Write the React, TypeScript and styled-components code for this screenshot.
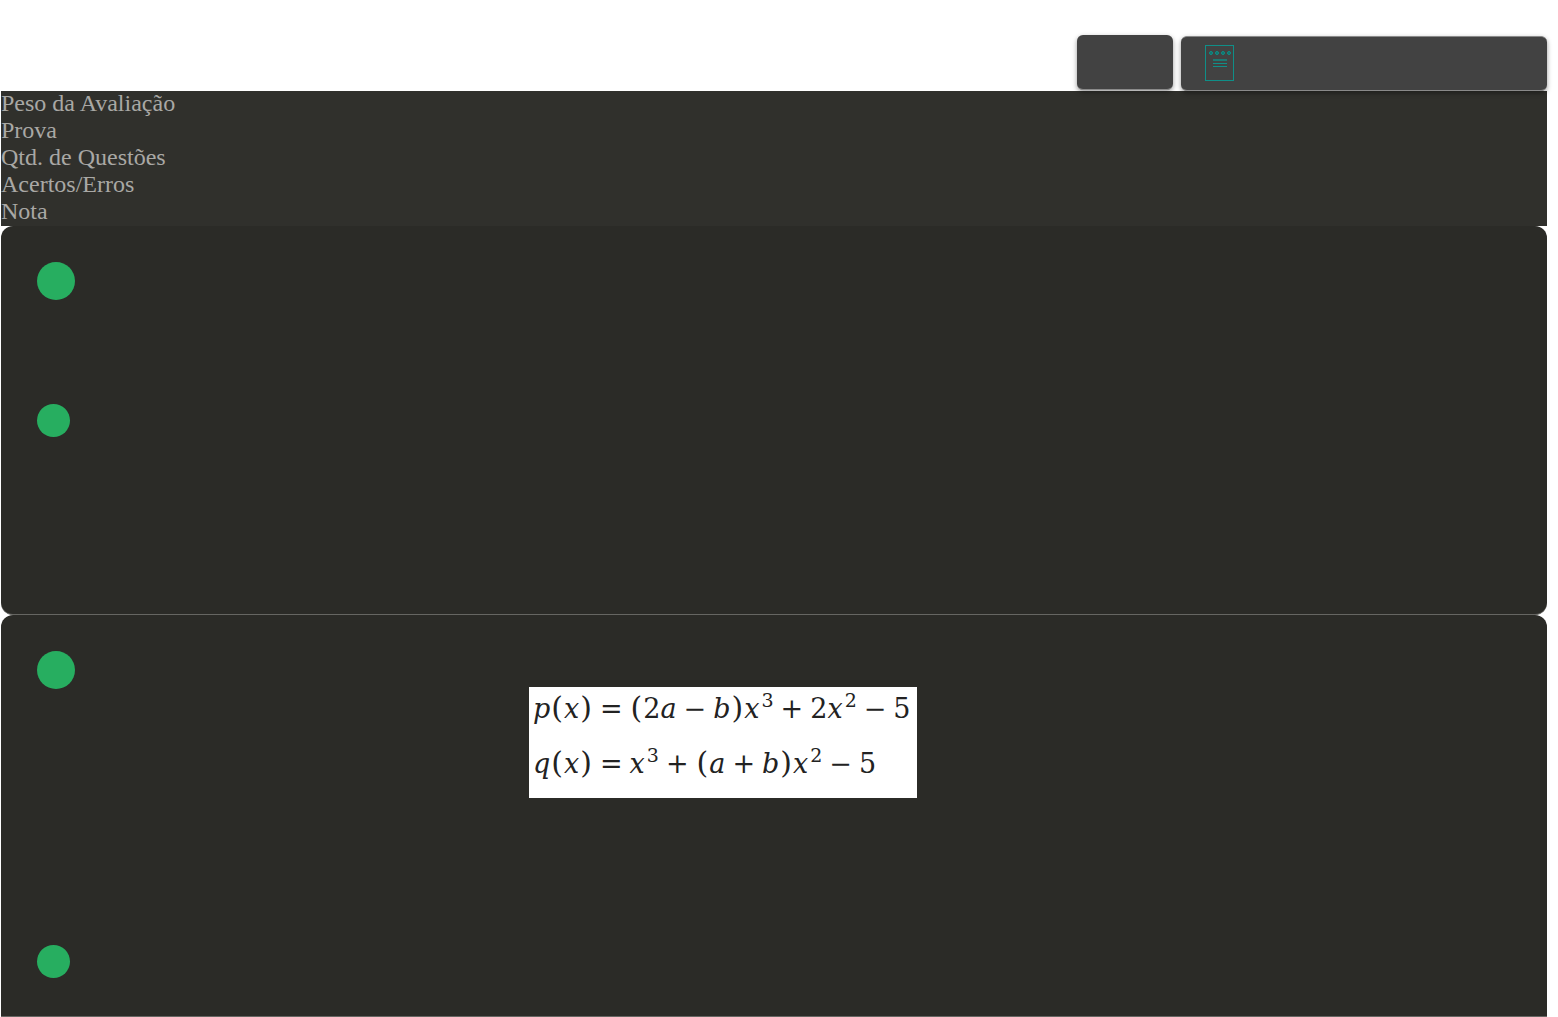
import React from "react";
import styled, { createGlobalStyle } from "styled-components";

const GlobalStyle = createGlobalStyle`
  * { box-sizing: border-box; }
  body {
    margin: 0;
    background: #fff;
    font-family: "Liberation Serif", "Times New Roman", serif;
  }
`;

const Page = styled.div`
  padding: 0 11px 0 1px;
`;

const Toolbar = styled.header`
  display: flex;
  justify-content: flex-end;
  align-items: flex-end;
  gap: 8px;
  padding-top: 35px;
  height: 91px;
`;

const ToolButton = styled.button<{ $wide?: boolean }>`
  position: relative;
  display: flex;
  align-items: center;
  width: ${(p) => (p.$wide ? "366px" : "96px")};
  height: 55px;
  margin-bottom: ${(p) => (p.$wide ? "0" : "1px")};
  padding: 0 24px;
  border: 0 solid #8a8a8a;
  border-top-width: ${(p) => (p.$wide ? "1px" : "0")};
  border-bottom-width: 1px;
  border-radius: 6px;
  background: #424242;
  box-shadow: 0 2px 5px rgba(0, 0, 0, 0.4);
`;

const Summary = styled.ul`
  margin: 0;
  padding: 0;
  list-style: none;
  background: #30302c;
  color: #a9a8a5;
  font-size: 24px;
  line-height: 25px;

  li {
    padding-bottom: 2px;
  }
`;

const Question = styled.section`
  display: flex;
  flex-direction: column;
  align-items: flex-start;
  padding: 36px 36px 38px;
  border-bottom: 1px solid #666662;
  border-radius: 12px;
  background: #2b2b27;

  &:last-child {
    border-radius: 12px 12px 0 0;
  }
`;

const Dot = styled.span<{ $size: number }>`
  width: ${(p) => p.$size}px;
  height: ${(p) => p.$size}px;
  border-radius: 50%;
  background: #27ae60;
`;

const Statement = styled.div<{ $height: number }>`
  align-self: stretch;
  height: ${(p) => p.$height}px;
  margin-top: -2px;
  padding-right: 102px;
`;

const Answers = styled.div<{ $height: number }>`
  height: ${(p) => p.$height}px;
`;

const Formula = styled.div`
  width: 388px;
  height: 111px;
  margin: 0 auto;
  padding-left: 4px;
  background: #fff;
  color: #222;
  font-family: "DejaVu Serif", serif;
  font-size: 27px;
`;

const Equation = styled.div`
  display: flex;
  align-items: baseline;
  gap: 7px;
  height: 55px;
  line-height: 43px;
  white-space: nowrap;

  sup {
    font-size: 19px;
    line-height: 0;
    vertical-align: 11px;
    margin-left: 2px;
  }
`;

const Paren = styled.span`
  margin: 0 1px;
  font-size: 30px;
  line-height: 0;
`;

const NotepadIcon = () => (
  <svg width="30" height="37" viewBox="0 0 30 37" fill="none" stroke="#0f8f88" aria-hidden="true">
    <rect x="0.5" y="0.5" width="28" height="35" />
    {[6, 12, 18, 24].map((x) => (
      <circle key={x} cx={x} cy="8" r="1.5" fill="#0f6f6c" />
    ))}
    <path d="M8 14.5h14M8 15.5h14" strokeOpacity="0.7" />
    <path d="M8 18.5h14M8 21.5h14" />
  </svg>
);

const labels = ["Peso da Avaliação", "Prova", "Qtd. de Questões", "Acertos/Erros", "Nota"];

export default function App() {
  return (
    <Page>
      <GlobalStyle />
      <Toolbar>
        <ToolButton type="button" aria-label="Voltar" />
        <ToolButton type="button" $wide aria-label="Prova">
          <NotepadIcon />
        </ToolButton>
      </Toolbar>
      <Summary>
        {labels.map((label) => (
          <li key={label}>{label}</li>
        ))}
      </Summary>
      <main>
        <Question>
          <Dot $size={38} />
          <Statement $height={106} />
          <Dot $size={33} />
          <Answers $height={139} />
        </Question>
        <Question>
          <Dot $size={38} />
          <Statement $height={258}>
            <Formula>
              <Equation>
                <span><i>p</i><Paren>(</Paren><i>x</i><Paren>)</Paren></span>
                <span>=</span>
                <span><Paren>(</Paren>2<i>a</i></span>
                <span>−</span>
                <span><i>b</i><Paren>)</Paren><i>x</i><sup>3</sup></span>
                <span>+</span>
                <span>2<i>x</i><sup>2</sup></span>
                <span>−</span>
                <span>5</span>
              </Equation>
              <Equation>
                <span><i>q</i><Paren>(</Paren><i>x</i><Paren>)</Paren></span>
                <span>=</span>
                <span><i>x</i><sup>3</sup></span>
                <span>+</span>
                <span><Paren>(</Paren><i>a</i></span>
                <span>+</span>
                <span><i>b</i><Paren>)</Paren><i>x</i><sup>2</sup></span>
                <span>−</span>
                <span>5</span>
              </Equation>
            </Formula>
          </Statement>
          <Dot $size={33} />
        </Question>
      </main>
    </Page>
  );
}
